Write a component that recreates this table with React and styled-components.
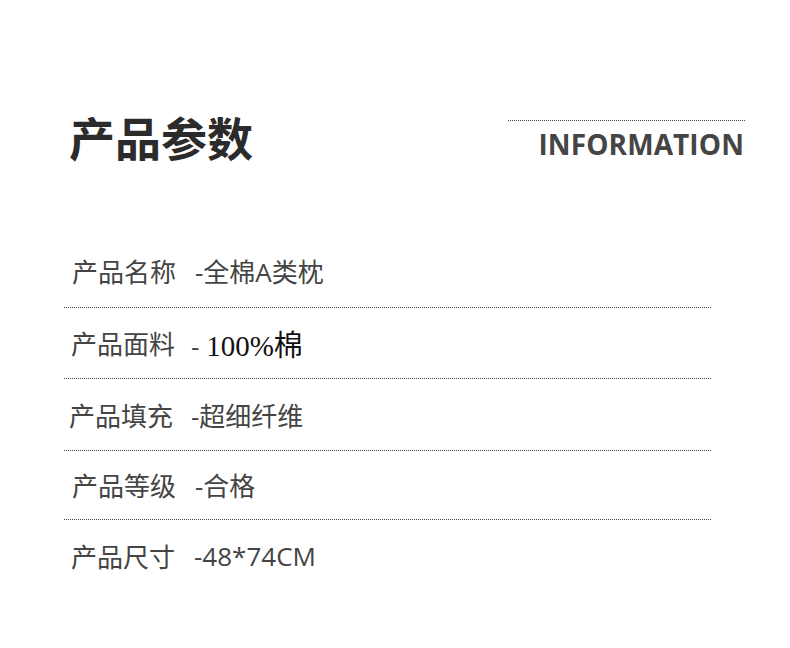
import React from "react";
import styled, { createGlobalStyle } from "styled-components";

const GlobalStyle = createGlobalStyle`
  html, body {
    margin: 0;
    padding: 0;
    background: #ffffff;
  }
  body {
    font-family: "Noto Sans CJK SC", "Noto Sans", sans-serif;
  }
`;

const Page = styled.div`
  width: 790px;
  height: 648px;
  background: #ffffff;
  overflow: hidden;
`;

const Header = styled.div`
  display: flex;
  justify-content: space-between;
  align-items: flex-start;
  padding: 113px 45px 0 69px;
`;

const Title = styled.h1`
  margin: 0;
  font-family: "Noto Sans CJK SC", sans-serif;
  font-size: 46px;
  line-height: 1;
  font-weight: 700;
  color: #2b2b2b;
`;

const EnBlock = styled.div`
  width: 237px;
  margin-top: 7px;
  border-top: 1px dotted #444;
  text-align: right;
`;

const EnTitle = styled.div`
  margin-top: 9px;
  margin-right: 1px;
  font-family: "Open Sans", "Liberation Sans", sans-serif;
  font-size: 28px;
  line-height: 1;
  font-weight: 700;
  letter-spacing: 0.1px;
  color: #454545;
`;

const List = styled.div`
  width: 647px;
  margin: 76px 0 0 64px;
`;

const Row = styled.div`
  display: flex;
  align-items: center;
  height: ${(p) => p.h}px;
  padding-left: ${(p) => p.indent}px;
  border-bottom: ${(p) => (p.last ? "none" : "1px dotted #444")};
  font-family: "Open Sans", "Noto Sans CJK SC", sans-serif;
  font-size: 26px;
  font-weight: 400;
  color: #444;
`;

const Label = styled.span`
  width: 104px;
  flex-shrink: 0;
`;

const Value = styled.span`
  margin-left: ${(p) => p.gap}px;
  white-space: pre;
`;

const Serif = styled.span`
  font-family: "Liberation Serif", "Noto Sans CJK SC", serif;
  font-size: 29px;
  font-weight: 400;
  color: #111;
`;

const rows = [
  { label: "产品名称", value: "-全棉A类枕", indent: 8, gap: 19, h: 72 },
  { label: "产品面料", value: "- ", serif: "100%棉", indent: 7, gap: 16, h: 70 },
  { label: "产品填充", value: "-超细纤维", indent: 5, gap: 18, h: 71 },
  { label: "产品等级", value: "-合格", indent: 8, gap: 19, h: 68 },
  { label: "产品尺寸", value: "-48*74CM", indent: 7, gap: 19, h: 72 },
];

export default function App() {
  return (
    <Page>
      <GlobalStyle />
      <Header>
        <Title>产品参数</Title>
        <EnBlock>
          <EnTitle>INFORMATION</EnTitle>
        </EnBlock>
      </Header>
      <List>
        {rows.map((r, i) => (
          <Row key={r.label} indent={r.indent} h={r.h} last={i === rows.length - 1}>
            <Label>{r.label}</Label>
            <Value gap={r.gap}>
              {r.value}
              {r.serif && <Serif>{r.serif}</Serif>}
            </Value>
          </Row>
        ))}
      </List>
    </Page>
  );
}
